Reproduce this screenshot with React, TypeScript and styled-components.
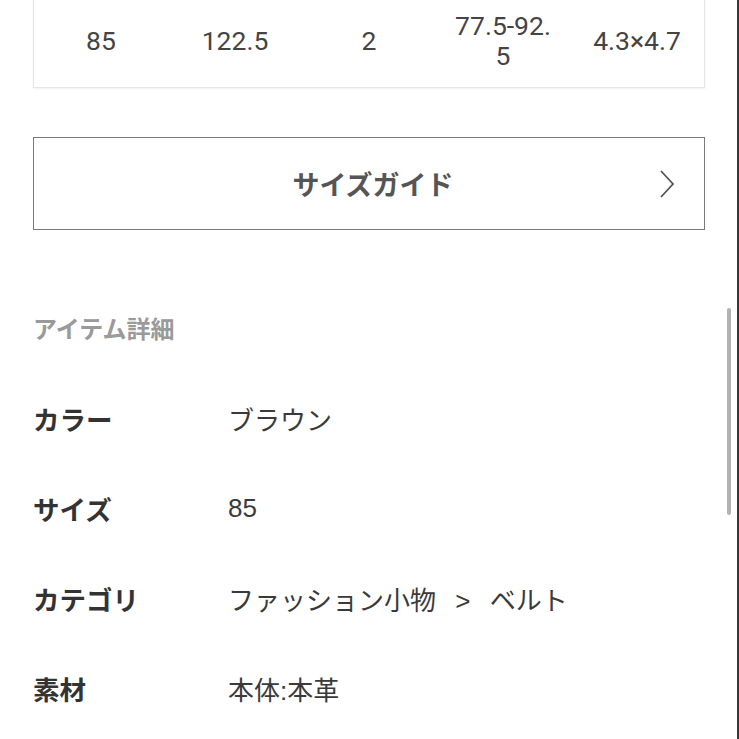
import * as React from 'react';
import styled, { createGlobalStyle } from 'styled-components';

const GlobalStyle = createGlobalStyle`
    html, body {
        margin: 0;
        padding: 0;
        background: #fff;
    }
    body {
        font-family: "Noto Sans CJK JP", "Noto Sans", sans-serif;
        color: #333;
    }
`;

const Page = styled.div`
    position: relative;
    box-sizing: border-box;
    width: 739px;
    height: 739px;
    overflow: hidden;
    padding: 0 32px 0 33px;
    border-right: 2px solid #3a3a3a;
`;

const SizeTableCard = styled.div`
    display: grid;
    grid-template-columns: repeat(5, 1fr);
    align-items: center;
    padding: 11px 0 16px;
    border: 1px solid #e6e6e6;
    border-top: none;
    box-shadow: 0 1px 2px rgba(0, 0, 0, 0.06);
`;

const SizeCell = styled.div`
    padding: 0 16px;
    text-align: center;
    font-family: Roboto, "Liberation Sans", sans-serif;
    font-size: 26.5px;
    line-height: 30px;
    color: #444;
    word-break: break-all;
`;

const GuideButton = styled.button`
    position: relative;
    display: flex;
    align-items: center;
    justify-content: center;
    box-sizing: border-box;
    width: 100%;
    height: 93px;
    margin-top: 49px;
    background: #fff;
    border: 1.5px solid #7a7a7a;
    font-family: inherit;
    font-size: 27px;
    font-weight: 700;
    color: #555;
    cursor: pointer;
    padding: 0 0 0 8px;
`;

const Chevron = styled.svg`
    position: absolute;
    right: 28px;
    top: 50%;
    transform: translateY(-50%);
`;

const SectionTitle = styled.h2`
    margin: 81px 0 28px;
    font-size: 24px;
    line-height: 34px;
    font-weight: 700;
    color: #9a9a9a;
`;

const DetailList = styled.dl`
    margin: 0;
`;

const DetailRow = styled.div`
    display: grid;
    grid-template-columns: 195px 1fr;
    align-items: center;
    height: 90px;
`;

const DetailLabel = styled.dt`
    font-size: 26.5px;
    font-weight: 700;
    color: #333;
`;

const DetailValue = styled.dd`
    margin: 0;
    font-family: "Liberation Sans", "Noto Sans CJK JP", sans-serif;
    font-size: 26px;
    word-spacing: 12px;
    color: #3a3a3a;
`;

const ScrollThumb = styled.div`
    position: absolute;
    left: 727px;
    top: 308px;
    width: 4px;
    height: 207px;
    border-radius: 2px;
    background: #b3b3b3;
`;

const sizes = ['85', '122.5', '2', '77.5-92.5', '4.3×4.7'];

const details: [string, string][] = [
    ['カラー', 'ブラウン'],
    ['サイズ', '85'],
    ['カテゴリ', 'ファッション小物 > ベルト'],
    ['素材', '本体:本革'],
];

export default function App(): JSX.Element {
    return (
        <>
            <GlobalStyle />
            <Page>
                <SizeTableCard>
                    {sizes.map((s) => (
                        <SizeCell key={s}>{s}</SizeCell>
                    ))}
                </SizeTableCard>
                <GuideButton>
                    サイズガイド
                    <Chevron width="18" height="30" viewBox="0 0 18 30" fill="none">
                        <path d="M3 2 L15 15 L3 28" stroke="#555" strokeWidth="1.8" strokeLinejoin="miter" />
                    </Chevron>
                </GuideButton>
                <SectionTitle>アイテム詳細</SectionTitle>
                <DetailList>
                    {details.map(([label, value]) => (
                        <DetailRow key={label}>
                            <DetailLabel>{label}</DetailLabel>
                            <DetailValue>{value}</DetailValue>
                        </DetailRow>
                    ))}
                </DetailList>
                <ScrollThumb />
            </Page>
        </>
    );
}
